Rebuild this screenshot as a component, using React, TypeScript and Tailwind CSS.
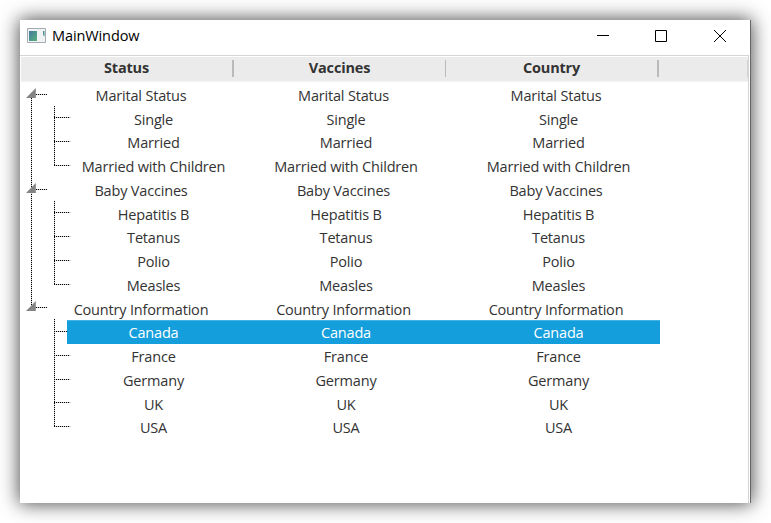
const groups = [
  { name: "Marital Status", children: ["Single", "Married", "Married with Children"] },
  { name: "Baby Vaccines", children: ["Hepatitis B", "Tetanus", "Polio", "Measles"] },
  { name: "Country Information", children: ["Canada", "France", "Germany", "UK", "USA"] },
];

const branches = [
  { y: 94, top: 106, ticks: [117, 141, 165] },
  { y: 189, top: 201, ticks: [212, 236, 260, 284] },
  { y: 307, top: 319, ticks: [331, 355, 379, 402, 426] },
];

function Connectors() {
  return (
    <svg className="pointer-events-none absolute left-0 top-[26px]" width="60" height="360" viewBox="20 82 60 360">
      <g stroke="#000" strokeWidth="1" strokeDasharray="1.2 0.8">
        <path d="M31.5 98V306" />
        {branches.map((b) => (
          <g key={b.y}>
            <path d={`M36 ${b.y + 0.5}H47`} />
            <path d={`M54.5 ${b.top}V${b.ticks[b.ticks.length - 1] + 1}`} />
            {b.ticks.map((t) => (
              <path key={t} d={`M54 ${t + 0.5}H${t === 331 ? 67 : 70.2}`} />
            ))}
          </g>
        ))}
      </g>
      {branches.map((b) => (
        <path key={b.y} d={`M35.8 ${b.y - 6}V${b.y + 4}H26Z`} fill="#848484" />
      ))}
    </svg>
  );
}

function Row({ text, child = false }: { text: string; child?: boolean }) {
  const selected = text === "Canada";
  return (
    <div
      className={`flex h-[23.75px] items-center whitespace-nowrap pt-[2.5px] text-center text-[14.5px] leading-[23px] ${
        child ? "ml-[47.25px] w-[592.5px]" : "ml-[24.75px] w-[617.5px]"
      } ${selected ? "bg-[#149edc] text-white shadow-[inset_0_1px_0_#42b3e4]" : "text-[#333]"}`}
    >
      <span className={child ? "w-[172.5px] shrink-0" : "w-[192.5px] shrink-0"}>{text}</span>
      <span className="w-[212.5px] shrink-0">{text}</span>
      <span className="w-[212.5px] shrink-0">{text}</span>
    </div>
  );
}

export default function App() {
  return (
    <div className="h-[523px] w-[771px] overflow-hidden bg-white pl-5 pt-5 font-['Open_Sans',sans-serif] tracking-[-0.18px]">
      <div className="flex h-[483px] w-[731px] flex-col border-r border-[#666] bg-white shadow-[0_0_18px_1px_rgba(0,0,0,0.7)]">
        <div className="flex h-[35px] shrink-0 items-center">
          <svg className="ml-[7px] mt-[-4px]" width="19" height="16" viewBox="0 0 19 16">
            <defs>
              <linearGradient id="pane" x1="0" y1="0" x2="1" y2="1">
                <stop offset="0" stopColor="#4679a0" />
                <stop offset="1" stopColor="#57b07c" />
              </linearGradient>
            </defs>
            <path d="M.5 .5H18.5V14.5H.5Z" fill="#f1f2f3" stroke="#a4abb5" />
            <path d="M2 3H10V13H2Z" fill="url(#pane)" />
            <path d="M16 3H17.5V8.5L16 7Z" fill="#4f9691" />
          </svg>
          <span className="ml-[6px] mt-[-3px] text-[14.5px] tracking-[-0.1px] text-black">MainWindow</span>
          <svg className="ml-auto mr-[22px] mt-[-4px]" width="131" height="14" viewBox="0 0 131 14" fill="none" stroke="#000" strokeWidth="1">
            <path d="M0 6.5H12M58.5 1.5H69.5V12.5H58.5ZM117 1L129 13M129 1L117 13" />
          </svg>
        </div>
        <div className="relative mr-px grow border-r border-t border-[#d4d4d4] pt-px">
          <div className="ml-px flex h-[25px] items-start border-b border-[#f4f4f4] bg-[#ebebeb] pt-[3px] text-center text-[14.5px] font-bold text-[#333]">
            <span className="h-[17px] w-[213px] border-r-2 border-[#bababa] leading-[15px]">Status</span>
            <span className="h-[17px] w-[212px] border-r border-[#bababa] leading-[15px]">Vaccines</span>
            <span className="h-[17px] w-[213px] border-r-2 border-[#bababa] leading-[15px]">Country</span>
            <span className="ml-auto h-[17px] w-px bg-[#d4d4d4]" />
          </div>
          <div className="pt-[0.25px]">
            {groups.map((g) => (
              <div key={g.name}>
                <Row text={g.name} />
                {g.children.map((c) => (
                  <Row key={c} text={c} child />
                ))}
              </div>
            ))}
          </div>
          <Connectors />
        </div>
      </div>
    </div>
  );
}
